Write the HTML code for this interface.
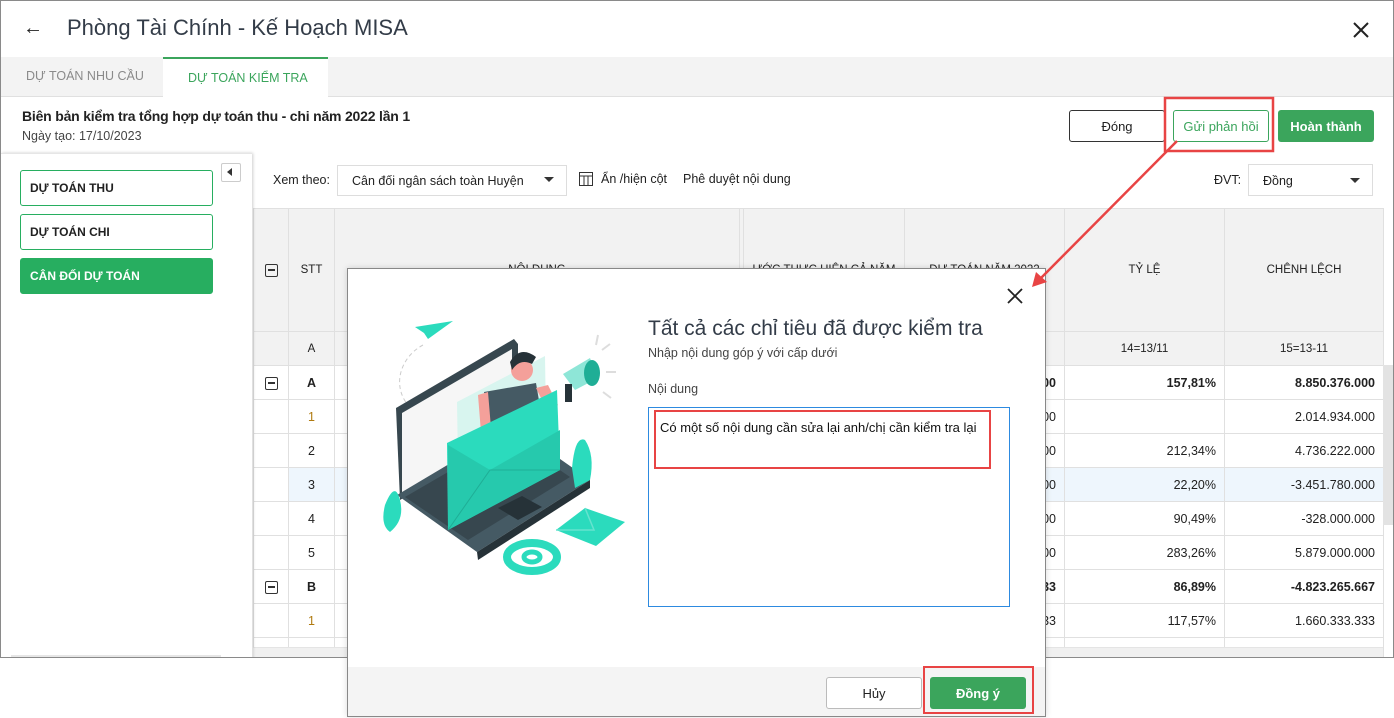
<!DOCTYPE html>
<html><head><meta charset="utf-8">
<style>
*{box-sizing:border-box;margin:0;padding:0}
body{width:1394px;height:718px;background:#fff;font-family:"Liberation Sans","DejaVu Sans",sans-serif;color:#212121;position:relative;overflow:hidden;font-size:13px}
.abs{position:absolute}
.win{left:0;top:0;width:1394px;height:658px;border:1px solid #8a8a8a;background:#fff;overflow:hidden}
.btn{position:absolute;border-radius:3px;font-size:13px;display:flex;align-items:center;justify-content:center}
.lb{position:absolute;left:19px;width:193px;height:36px;border:1px solid #27ae60;border-radius:3px;font-size:12px;font-weight:bold;padding-left:9px;display:flex;align-items:center;color:#212121}
table{border-collapse:collapse;position:absolute;left:252px;top:207px;table-layout:fixed;width:1130px}
td{border:1px solid #e0e0e0;height:34px;font-size:12.5px;padding:0 8px;white-space:nowrap;overflow:hidden}
td.z{padding:0}
.h td{background:#f2f2f2;text-align:center;font-size:11.5px}
.r{text-align:right}.c{text-align:center}.b{font-weight:bold}
.cb{display:inline-block;width:13px;height:13px;border:1.5px solid #333;border-radius:2px;position:relative;vertical-align:middle}
.cb:after{content:"";position:absolute;left:2px;right:2px;top:4.5px;height:1.5px;background:#333}
</style></head><body>
<div class="abs win">
  <div class="abs" style="left:22px;top:16px;font-size:20px;">&#8592;</div>
  <div class="abs" style="left:66px;top:14px;font-size:22px;color:#333c48;">Phòng Tài Chính - Kế Hoạch MISA</div>
  <svg class="abs" style="left:1352px;top:21px" width="16" height="16"><path d="M1,1L15,15M15,1L1,15" stroke="#222" stroke-width="2"/></svg>
  <div class="abs" style="left:0;top:56px;width:1394px;height:40px;background:#f3f3f3;border-bottom:1px solid #e0e0e0"></div>
  <div class="abs" style="left:25px;top:68px;font-size:12.5px;color:#8a8a8a;">DỰ TOÁN NHU CẦU</div>
  <div class="abs" style="left:162px;top:56px;width:165px;height:41px;background:#fff;border-top:2px solid #3ba55c;"></div>
  <div class="abs" style="left:187px;top:70px;font-size:12.5px;color:#3ba55c;">DỰ TOÁN KIỂM TRA</div>
  <div class="abs" style="left:21px;top:107px;font-size:14px;font-weight:bold;color:#222;letter-spacing:-0.2px">Biên bản kiểm tra tổng hợp dự toán thu - chi năm 2022 lần 1</div>
  <div class="abs" style="left:21px;top:128px;font-size:12.5px;color:#444">Ngày tạo: 17/10/2023</div>
  <div class="btn" style="left:1068px;top:109px;width:96px;height:32px;border:1px solid #333;">Đóng</div>
  <div class="btn" style="left:1172px;top:109px;width:96px;height:32px;border:1px solid #3ba55c;color:#3ba55c">Gửi phản hồi</div>
  <div class="btn" style="left:1277px;top:109px;width:96px;height:32px;background:#3ba55c;color:#fff;font-weight:bold">Hoàn thành</div>
  <div class="abs" style="left:272px;top:172px;font-size:12.5px;">Xem theo:</div>
  <div class="abs" style="left:336px;top:164px;width:230px;height:31px;border:1px solid #ddd;padding:8px 14px;font-size:12.5px;">Cân đối ngân sách toàn Huyện<span style="position:absolute;right:12px;top:11px;border:5px solid transparent;border-top:5px solid #333"></span></div>
  <svg class="abs" style="left:578px;top:171px" width="14" height="14"><rect x="0.5" y="0.5" width="13" height="13" fill="none" stroke="#333"/><line x1="0" y1="4" x2="14" y2="4" stroke="#333"/><line x1="5" y1="4" x2="5" y2="14" stroke="#333"/><line x1="9" y1="4" x2="9" y2="14" stroke="#333"/></svg>
  <div class="abs" style="left:600px;top:171px;font-size:12.5px;">Ẩn /hiện cột</div>
  <div class="abs" style="left:682px;top:171px;font-size:12.5px;">Phê duyệt nội dung</div>
  <div class="abs" style="left:1213px;top:172px;font-size:12.5px;">ĐVT:</div>
  <div class="abs" style="left:1247px;top:163px;width:125px;height:32px;border:1px solid #ddd;padding:9px 14px;font-size:12.5px;">Đồng<span style="position:absolute;right:12px;top:13px;border:5px solid transparent;border-top:5px solid #333"></span></div>

  <table>
   <colgroup><col style="width:35px"><col style="width:46px"><col style="width:405px"><col style="width:4px"><col style="width:161px"><col style="width:160px"><col style="width:160px"><col style="width:159px"></colgroup>
   <tr class="h"><td style="height:123px" class="z"><span class="cb"></span></td><td class="z">STT</td><td>NỘI DUNG</td><td class="z"></td><td class="z">ƯỚC THỰC HIỆN CẢ NĂM</td><td class="z">DỰ TOÁN NĂM 2022</td><td>TỶ LỆ</td><td>CHÊNH LỆCH</td></tr>
   <tr class="h"><td></td><td class="z">A</td><td></td><td class="z"></td><td></td><td></td><td>14=13/11</td><td>15=13-11</td></tr>
   <tr class="b"><td class="c z"><span class="cb"></span></td><td class="c z">A</td><td></td><td class="z"></td><td></td><td class="r">000</td><td class="r">157,81%</td><td class="r">8.850.376.000</td></tr>
   <tr><td class="z"></td><td class="c z" style="color:#b07a10">1</td><td></td><td class="z"></td><td></td><td class="r">000</td><td class="r"></td><td class="r">2.014.934.000</td></tr>
   <tr><td class="z"></td><td class="c z">2</td><td></td><td class="z"></td><td></td><td class="r">000</td><td class="r">212,34%</td><td class="r">4.736.222.000</td></tr>
   <tr style="background:#eef6fd"><td class="z" style="background:#fff"></td><td class="c z">3</td><td></td><td class="z"></td><td></td><td class="r">000</td><td class="r">22,20%</td><td class="r">-3.451.780.000</td></tr>
   <tr><td class="z"></td><td class="c z">4</td><td></td><td class="z"></td><td></td><td class="r">000</td><td class="r">90,49%</td><td class="r">-328.000.000</td></tr>
   <tr><td class="z"></td><td class="c z">5</td><td></td><td class="z"></td><td></td><td class="r">000</td><td class="r">283,26%</td><td class="r">5.879.000.000</td></tr>
   <tr class="b"><td class="c z"><span class="cb"></span></td><td class="c z">B</td><td></td><td class="z"></td><td></td><td class="r">333</td><td class="r">86,89%</td><td class="r">-4.823.265.667</td></tr>
   <tr><td class="z"></td><td class="c z" style="color:#b07a10">1</td><td></td><td class="z"></td><td></td><td class="r">333</td><td class="r">117,57%</td><td class="r">1.660.333.333</td></tr>
   <tr><td class="z"></td><td class="z"></td><td></td><td class="z"></td><td></td><td></td><td></td><td></td></tr>
  </table>
  <div class="abs" style="left:252px;top:646px;width:1130px;height:11px;background:#f0f0f0;border-top:1px solid #e4e4e4"></div>
  <div class="abs" style="left:1382px;top:364px;width:11px;height:160px;background:#e3e3e3"></div>

  <div class="abs" style="left:0;top:152px;width:251px;height:506px;background:#fff;box-shadow:1px 0 3px rgba(0,0,0,.2);border-top:1px solid #e6e6e6"></div>
  <div class="abs" style="left:220px;top:162px;width:20px;height:19px;border:1px solid #ccc;border-radius:2px;"><span style="position:absolute;left:5px;top:4px;border:4px solid transparent;border-right:5px solid #333;border-left:0"></span></div>
  <div class="lb" style="top:169px">DỰ TOÁN THU</div>
  <div class="lb" style="top:213px">DỰ TOÁN CHI</div>
  <div class="lb" style="top:257px;background:#27ae60;color:#fff">CÂN ĐỐI DỰ TOÁN</div>
  <div class="abs" style="left:10px;top:654px;width:210px;height:3px;background:#e6e6e6"></div>
</div>

<div class="abs" style="left:347px;top:268px;width:699px;height:449px;border:1px solid #888;background:#fff;box-shadow:0 0 6px rgba(0,0,0,.15)">
  <div class="abs" style="left:0;top:398px;width:697px;height:49px;background:#f4f4f4"></div>
  <svg class="abs" style="left:659px;top:19px" width="16" height="16"><path d="M1,1L15,15M15,1L1,15" stroke="#222" stroke-width="1.8"/></svg>
  <div class="abs" style="left:300px;top:48px;font-size:21px;color:#333c48;">Tất cả các chỉ tiêu đã được kiểm tra</div>
  <div class="abs" style="left:300px;top:77px;font-size:12.5px;color:#444">Nhập nội dung góp ý với cấp dưới</div>
  <div class="abs" style="left:300px;top:113px;font-size:12.5px;color:#444">Nội dung</div>
  <div class="abs" style="left:300px;top:138px;width:362px;height:200px;border:1px solid #2d8ae0;"></div>
  <div class="abs" style="left:306px;top:141px;width:337px;height:59px;border:2px solid #e84444;padding:8px 4px;font-size:13px;color:#111">Có một số nội dung cần sửa lại anh/chị cần kiểm tra lại</div>
  <div class="btn" style="left:478px;top:408px;width:96px;height:32px;border:1px solid #bbb;background:#fff;">Hủy</div>
  <div class="abs" style="left:575px;top:397px;width:111px;height:48px;border:2px solid #e84444"></div>
  <div class="btn" style="left:582px;top:408px;width:96px;height:32px;background:#3ba55c;color:#fff;font-weight:bold">Đồng ý</div>
</div>

<svg class="abs" style="left:0;top:0" width="1394" height="718">
  <rect x="1165" y="98" width="108" height="53" fill="none" stroke="#e84444" stroke-width="2.5"/>
  <line x1="1177" y1="141" x2="1040" y2="279" stroke="#e84444" stroke-width="2.5"/>
  <polygon points="1032,287 1036,272 1047,282" fill="#e84444"/>
  <path d="M423,345 C395,360 388,400 425,418" fill="none" stroke="#ccc" stroke-dasharray="4,3"/>
  <polygon points="415,327 453,321 428,339 424,333" fill="#2bdbbd"/>
  <polygon points="396,408 514,339 518,344 518,430 400,500" fill="#37474f"/>
  <polygon points="402,413 512,349 512,430 402,493" fill="#f6f6f6"/>
  <polygon points="397,495 513,426 590,480 477,552" fill="#455a64"/>
  <polygon points="405,497 510,436 570,477 468,540" fill="#37474f"/>
  <polygon points="477,552 590,480 590,488 478,560" fill="#263238"/>
  <polygon points="498,508 522,496 542,507 518,520" fill="#263238"/>
  <polygon points="457,402 545,356 546,420 458,465" fill="#d8f5ef"/>
  <circle cx="522" cy="370" r="11" fill="#f4a09a"/>
  <path d="M510,362 Q520,345 536,357 L532,364 Q520,358 512,370Z" fill="#263238"/>
  <polygon points="484,392 536,383 544,430 494,440" fill="#455a64"/>
  <polygon points="478,395 488,392 492,440 482,445" fill="#f4a09a"/>
  <polygon points="536,388 548,385 558,405 548,412" fill="#f4a09a"/>
  <polygon points="447,443 557,390 560,470 448,530" fill="#2bdbbd"/>
  <polygon points="448,445 490,470 560,430 560,470 448,530" fill="#26c9ad"/>
  <path d="M448,530 L490,470 L560,470" fill="none" stroke="#1fae96" stroke-width="1"/>
  <polygon points="563,374 590,358 598,378 575,390" fill="#8ee6d7"/>
  <ellipse cx="592" cy="373" rx="8" ry="13" fill="#1fae96"/>
  <rect x="565" y="384" width="7" height="18" fill="#263238"/>
  <path d="M602,350l8,-6M606,372h10M603,392l8,6M596,345l2,-10" stroke="#ddd" stroke-width="2"/>
  <polygon points="556,530 585,508 625,522 596,546" fill="#2bdbbd"/>
  <path d="M556,530 L594,530 L585,508" fill="none" stroke="#66e3cf" stroke-width="1.5"/>
  <ellipse cx="532" cy="557" rx="25" ry="14" fill="none" stroke="#2bdbbd" stroke-width="8"/>
  <ellipse cx="532" cy="557" rx="8" ry="5" fill="none" stroke="#2bdbbd" stroke-width="5"/>
  <path d="M385,505 Q395,480 400,500 Q405,520 390,532 Q380,525 385,505Z" fill="#2bdbbd"/>
  <path d="M572,468 Q575,435 585,440 Q595,455 590,480 L575,488Z" fill="#2bdbbd"/>
</svg>
</body></html>
